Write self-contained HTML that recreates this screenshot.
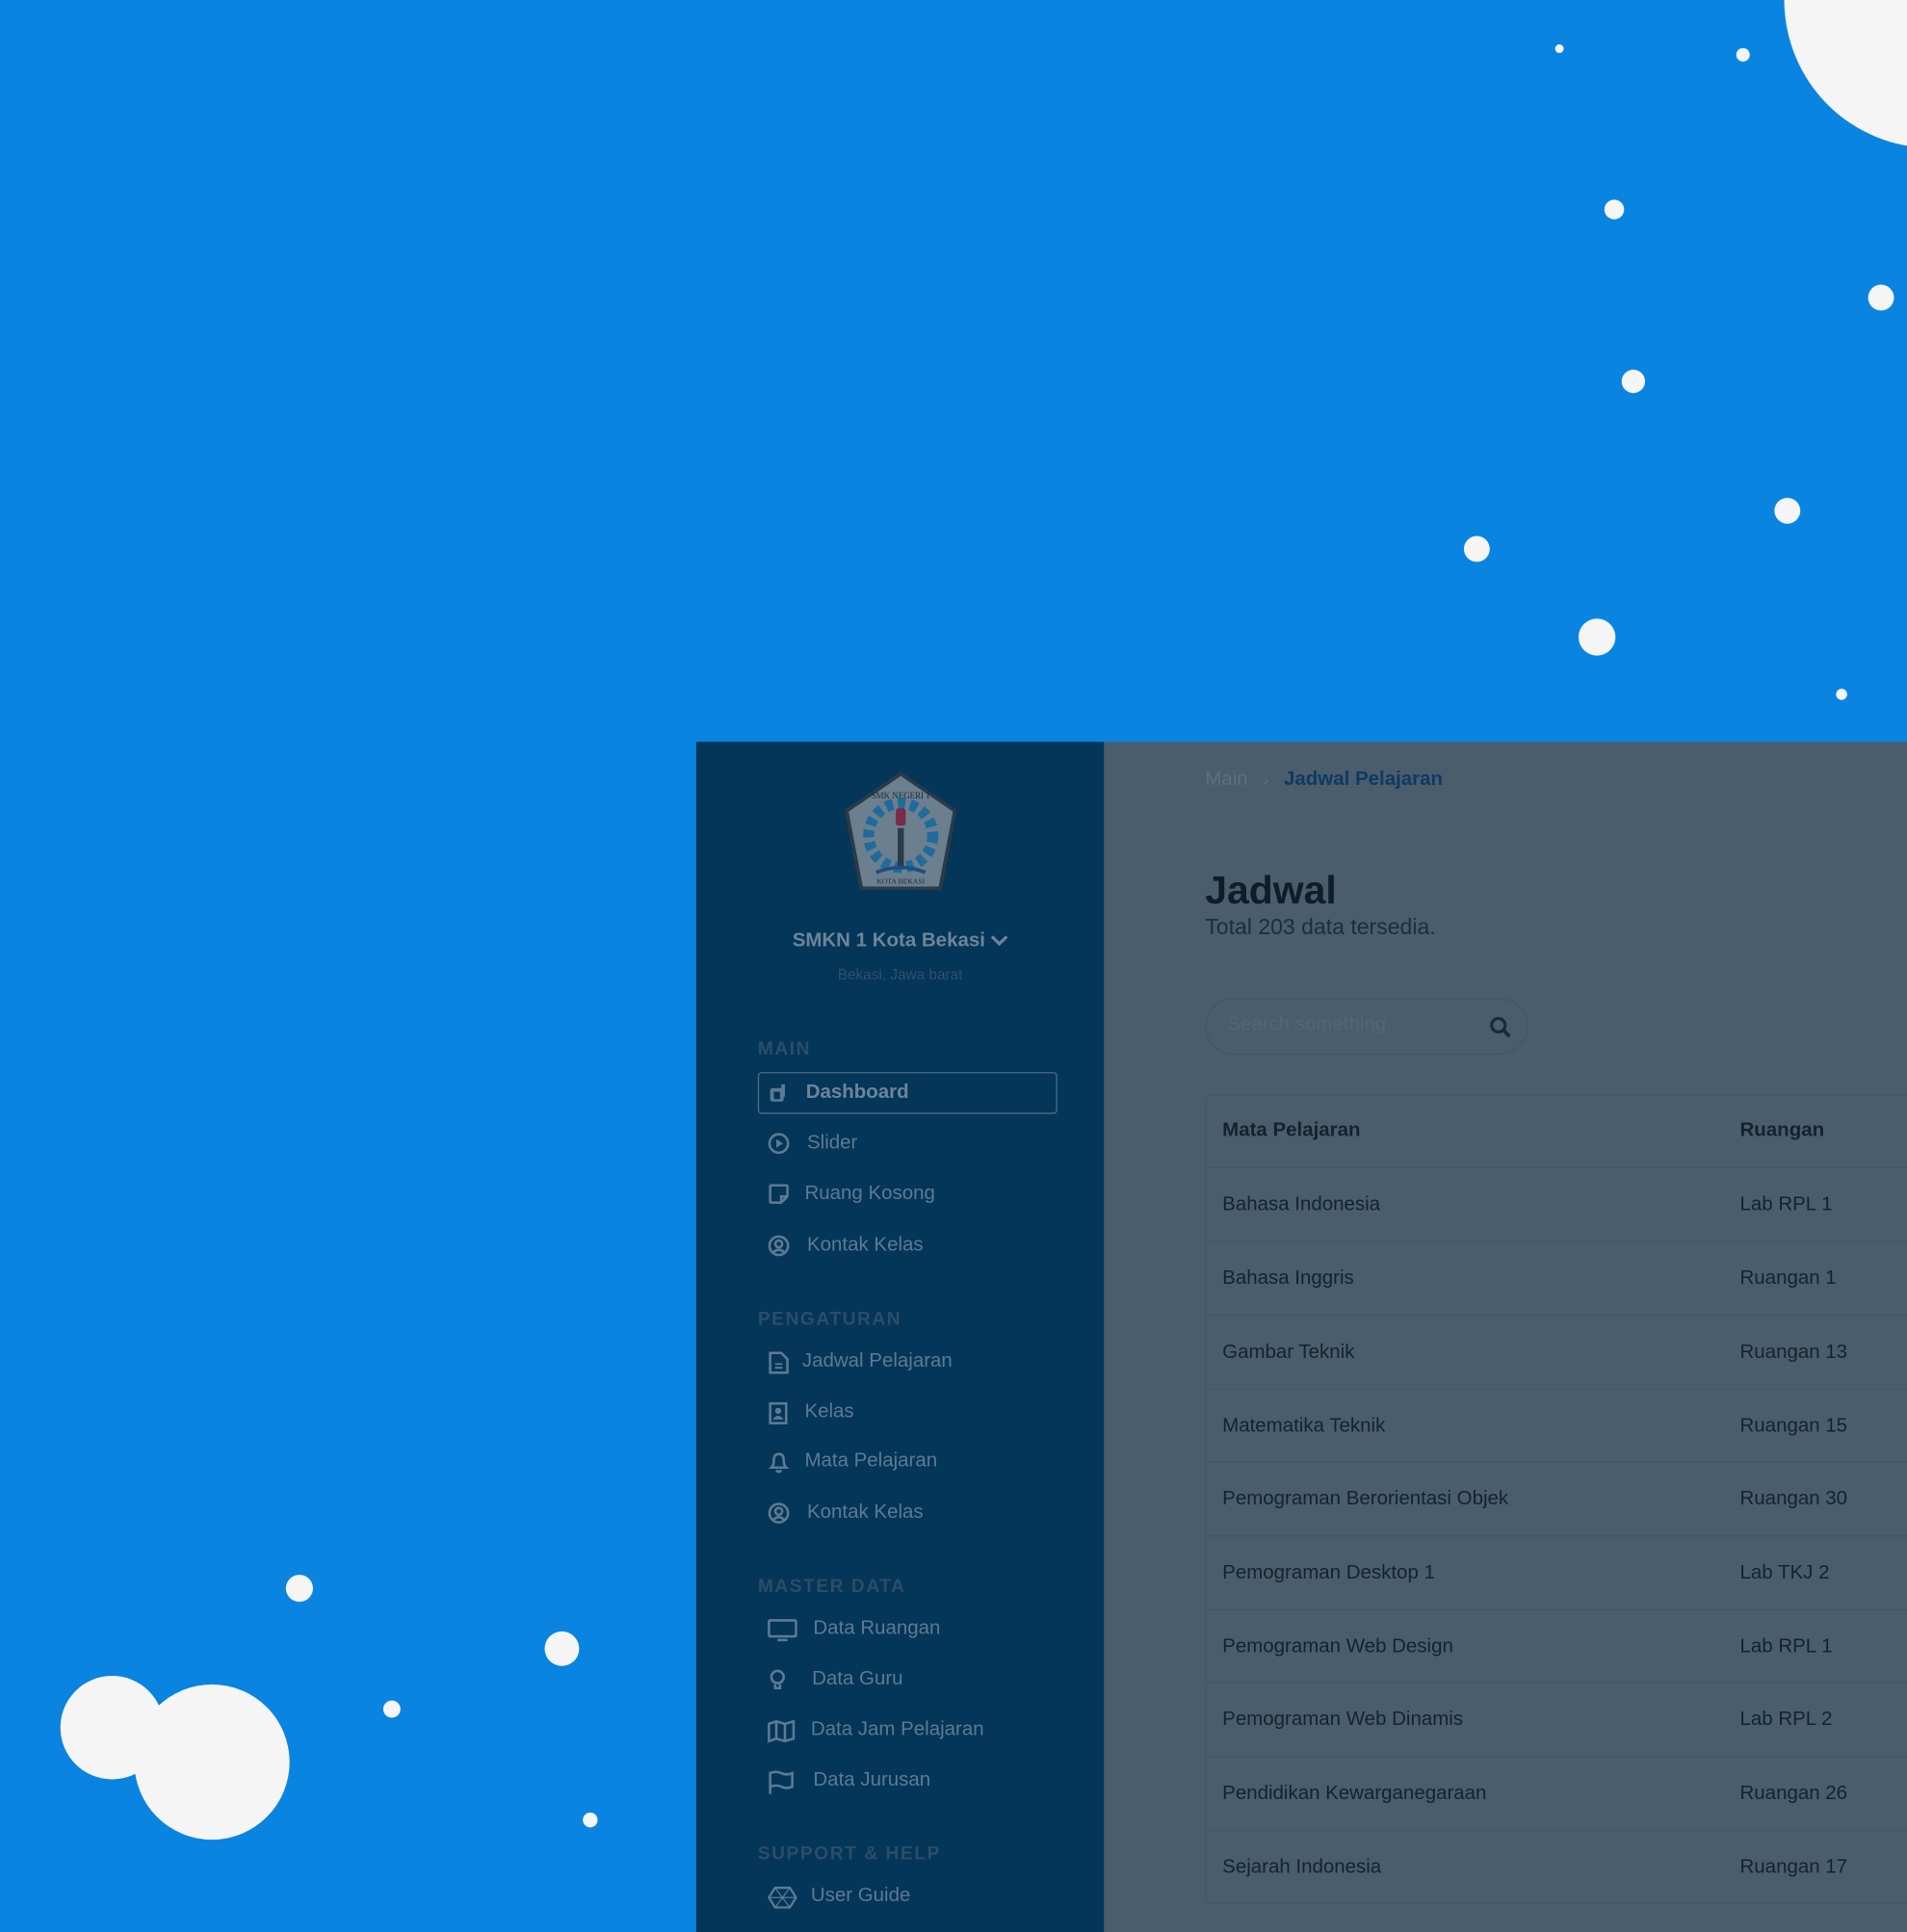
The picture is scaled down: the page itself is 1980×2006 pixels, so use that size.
<!DOCTYPE html>
<html><head><meta charset="utf-8"><style>
*{margin:0;padding:0;box-sizing:border-box}
html,body{width:1980px;height:1980px;overflow:hidden;background:#0a84e1}
#w{position:absolute;left:0;top:0;width:1568px;height:1568px;transform:scale(1.2794);transform-origin:0 0;font-family:"Liberation Sans",sans-serif}
.c{position:absolute;border-radius:50%;background:#f5f5f5}
.a{position:absolute;white-space:nowrap}
#sb{position:absolute;left:565px;top:602px;width:331px;height:966px;background:#033658}
#mn{position:absolute;left:896px;top:602px;width:672px;height:966px;background:#4a5d6c}
.it{position:absolute;left:50px;width:260px;height:20px;line-height:20px;font-size:16px;color:#5e7a92;white-space:nowrap}
.it svg{position:absolute;left:8px;top:1px}
.it span{position:absolute;left:38px;top:0;white-space:nowrap}
.hd{position:absolute;left:50px;font-size:15px;font-weight:bold;letter-spacing:1.2px;color:#2c4d68;white-space:nowrap}
.row{position:absolute;left:82px;width:600px;height:60px;border-top:1px solid #435664;font-size:16px;color:#14222f;line-height:60px;white-space:nowrap}
.row span{position:absolute;left:14px}
.row b{position:absolute;left:434px;font-weight:normal}
</style></head><body><div id="w">
<div class="c" style="left:1448px;top:-120px;width:240px;height:240px"></div>
<div class="c" style="left:1262px;top:36px;width:7px;height:7px"></div>
<div class="c" style="left:1409px;top:39px;width:11px;height:11px"></div>
<div class="c" style="left:1302px;top:162px;width:16px;height:16px"></div>
<div class="c" style="left:1516px;top:231px;width:21px;height:21px"></div>
<div class="c" style="left:1316px;top:300px;width:19px;height:19px"></div>
<div class="c" style="left:1440px;top:404px;width:21px;height:21px"></div>
<div class="c" style="left:1188px;top:435px;width:21px;height:21px"></div>
<div class="c" style="left:1281px;top:502px;width:30px;height:30px"></div>
<div class="c" style="left:1490px;top:559px;width:9px;height:9px"></div>
<div class="c" style="left:232px;top:1278px;width:22px;height:22px"></div>
<div class="c" style="left:442px;top:1324px;width:28px;height:28px"></div>
<div class="c" style="left:311px;top:1380px;width:14px;height:14px"></div>
<div class="c" style="left:473px;top:1471px;width:12px;height:12px"></div>
<div class="c" style="left:49px;top:1360px;width:84px;height:84px"></div>
<div class="c" style="left:109px;top:1367px;width:126px;height:126px"></div>

<div id="sb">
<svg style="position:absolute;left:118px;top:24px" width="96" height="100" viewBox="0 0 96 100">
<polygon points="48,2 92,32 80,95 16,95 4,32" fill="#6b7f8e" stroke="#2a3a48" stroke-width="3"/>
<circle cx="48" cy="52" r="26" fill="none" stroke="#1f6b9c" stroke-width="9" stroke-dasharray="6 4"/>
<rect x="44" y="30" width="8" height="14" rx="2" fill="#7a2a4a"/>
<path d="M48 46 L48 78" stroke="#2a3a48" stroke-width="5"/>
<path d="M28 82 Q48 74 68 82" stroke="#1f4f7c" stroke-width="3" fill="none"/>
<text x="48" y="22" font-size="7" text-anchor="middle" fill="#1e2a36" font-family="Liberation Serif">SMK NEGERI 1</text>
<text x="48" y="91" font-size="6" text-anchor="middle" fill="#1e2a36" font-family="Liberation Serif">KOTA BEKASI</text>
</svg>
<div class="a" style="left:0;width:331px;top:153px;text-align:center;font-size:16px;font-weight:bold;color:#6e8598">SMKN 1 Kota Bekasi <svg width="14" height="10" viewBox="0 0 14 10"><path d="M1 2 L7 8 L13 2" stroke="#6e8598" stroke-width="2.5" fill="none"/></svg></div>
<div class="a" style="left:0;width:331px;top:182px;text-align:center;font-size:12px;color:#2f506c">Bekasi, Jawa barat</div>
<div class="hd" style="top:241px">MAIN</div>
<div style="position:absolute;left:50px;top:268px;width:243px;height:34px;border:1px solid #4f6d86;border-radius:3px"></div>
<div class="it" style="top:275px;color:#6e8598;font-weight:bold"><svg width="18" height="18" viewBox="0 0 18 18"><rect x="2" y="5" width="11" height="11" rx="2" fill="#5e7a92"/><rect x="5" y="8" width="5" height="6" fill="#033658"/><rect x="11" y="2" width="3" height="10" fill="#5e7a92"/></svg><span style="left:39px">Dashboard</span></div>
<div class="it" style="top:316px"><svg width="18" height="18"><circle cx="9" cy="9" r="7.5" fill="none" stroke="#5e7a92" stroke-width="2"/><path d="M7 5.5 L12.5 9 L7 12.5Z" fill="#5e7a92"/></svg><span style="left:40px">Slider</span></div>
<div class="it" style="top:357px"><svg width="18" height="18"><path d="M2 3 Q2 2 3 2 H15 Q16 2 16 3 V11 L11 16 H3 Q2 16 2 15Z M11 16 V11 H16" fill="none" stroke="#5e7a92" stroke-width="2"/></svg><span>Ruang Kosong</span></div>
<div class="it" style="top:399px"><svg width="18" height="18"><circle cx="9" cy="9" r="7.5" fill="none" stroke="#5e7a92" stroke-width="2"/><circle cx="9" cy="7.5" r="2.8" fill="none" stroke="#5e7a92" stroke-width="2"/><path d="M4.5 14.5 Q9 10 13.5 14.5" fill="none" stroke="#5e7a92" stroke-width="2"/></svg><span style="left:40px">Kontak Kelas</span></div>
<div class="hd" style="top:460px">PENGATURAN</div>
<div class="it" style="top:493px"><svg width="18" height="20"><path d="M2 2 H11 L16 7 V18 H2Z" fill="none" stroke="#5e7a92" stroke-width="2"/><path d="M6 11 H12 M6 14 H12" stroke="#5e7a92" stroke-width="1.5"/></svg><span style="left:36px">Jadwal Pelajaran</span></div>
<div class="it" style="top:534px"><svg width="18" height="20"><rect x="2" y="2" width="13" height="16" fill="none" stroke="#5e7a92" stroke-width="2"/><circle cx="8.5" cy="8" r="2.5" fill="#5e7a92"/><path d="M4 15 Q8.5 9 13 15Z" fill="#5e7a92"/></svg><span>Kelas</span></div>
<div class="it" style="top:574px"><svg width="18" height="20"><path d="M3 14 Q5 12 5 8 Q5 3 9 3 Q13 3 13 8 Q13 12 15 14Z M7 16 Q9 19 11 16" fill="none" stroke="#5e7a92" stroke-width="2"/></svg><span>Mata Pelajaran</span></div>
<div class="it" style="top:616px"><svg width="18" height="18"><circle cx="9" cy="9" r="7.5" fill="none" stroke="#5e7a92" stroke-width="2"/><circle cx="9" cy="7.5" r="2.8" fill="none" stroke="#5e7a92" stroke-width="2"/><path d="M4.5 14.5 Q9 10 13.5 14.5" fill="none" stroke="#5e7a92" stroke-width="2"/></svg><span style="left:40px">Kontak Kelas</span></div>
<div class="hd" style="top:677px">MASTER DATA</div>
<div class="it" style="top:710px"><svg width="24" height="20"><rect x="1" y="2" width="22" height="13" rx="1" fill="none" stroke="#5e7a92" stroke-width="2"/><path d="M8 18 H16" stroke="#5e7a92" stroke-width="2"/></svg><span style="left:45px">Data Ruangan</span></div>
<div class="it" style="top:751px"><svg width="18" height="20"><circle cx="8" cy="7" r="5" fill="none" stroke="#5e7a92" stroke-width="2"/><path d="M6 13 V16 H10 V13" stroke="#5e7a92" stroke-width="2" fill="none"/></svg><span style="left:44px">Data Guru</span></div>
<div class="it" style="top:792px"><svg width="24" height="20"><path d="M1 4 L7 2 L14 4 L21 2 V16 L14 18 L7 16 L1 18Z M7 2 V16 M14 4 V18" fill="none" stroke="#5e7a92" stroke-width="2"/></svg><span style="left:43px">Data Jam Pelajaran</span></div>
<div class="it" style="top:833px"><svg width="22" height="22"><path d="M2 2 V20 M2 3 Q7 1 11 3 Q15 5 20 3 V14 Q15 16 11 14 Q7 12 2 14" fill="none" stroke="#5e7a92" stroke-width="2"/></svg><span style="left:45px">Data Jurusan</span></div>
<div class="hd" style="top:894px">SUPPORT &amp; HELP</div>
<div class="it" style="top:927px"><svg width="24" height="20"><polygon points="6,2 18,2 23,10 18,18 6,18 1,10" fill="none" stroke="#5e7a92" stroke-width="1.8"/><path d="M6 2 L18 18 M18 2 L6 18 M1 10 H23" stroke="#5e7a92" stroke-width="1"/></svg><span style="left:43px">User Guide</span></div>
</div>

<div id="mn">
<div class="a" style="left:82px;top:22px;font-size:16px;color:#5d6f7d">Main <span style="margin:0 8px;font-size:13px">&#8250;</span> <b style="color:#0e3a64">Jadwal Pelajaran</b></div>
<div class="a" style="left:82px;top:102px;font-size:32px;font-weight:bold;color:#0f1d2a">Jadwal</div>
<div class="a" style="left:82px;top:140px;font-size:18px;color:#1d2d3b">Total 203 data tersedia.</div>
<div style="position:absolute;left:82px;top:208px;width:262px;height:46px;border:1px solid #435663;border-radius:23px"></div>
<div class="a" style="left:100px;top:221px;font-size:16px;color:#536675">Search something...</div>
<svg style="position:absolute;left:312px;top:222px" width="20" height="20"><circle cx="8" cy="8" r="5.5" fill="none" stroke="#1b2a37" stroke-width="2.5"/><path d="M12 12 L17 17" stroke="#1b2a37" stroke-width="3"/></svg>
<div style="position:absolute;left:82px;top:286px;width:600px;height:657px;border:1px solid #435663;border-radius:4px"></div>
<div class="row" style="top:286px;height:59px;border-top:none;font-weight:bold;line-height:59px"><span>Mata Pelajaran</span><b style="font-weight:bold">Ruangan</b></div>
<div class="row" style="top:345px"><span>Bahasa Indonesia</span><b>Lab RPL 1</b></div>
<div class="row" style="top:405px"><span>Bahasa Inggris</span><b>Ruangan 1</b></div>
<div class="row" style="top:465px"><span>Gambar Teknik</span><b>Ruangan 13</b></div>
<div class="row" style="top:525px"><span>Matematika Teknik</span><b>Ruangan 15</b></div>
<div class="row" style="top:584px"><span>Pemograman Berorientasi Objek</span><b>Ruangan 30</b></div>
<div class="row" style="top:644px"><span>Pemograman Desktop 1</span><b>Lab TKJ 2</b></div>
<div class="row" style="top:704px"><span>Pemograman Web Design</span><b>Lab RPL 1</b></div>
<div class="row" style="top:763px"><span>Pemograman Web Dinamis</span><b>Lab RPL 2</b></div>
<div class="row" style="top:823px"><span>Pendidikan Kewarganegaraan</span><b>Ruangan 26</b></div>
<div class="row" style="top:883px"><span>Sejarah Indonesia</span><b>Ruangan 17</b></div>
</div>
</div></body></html>
